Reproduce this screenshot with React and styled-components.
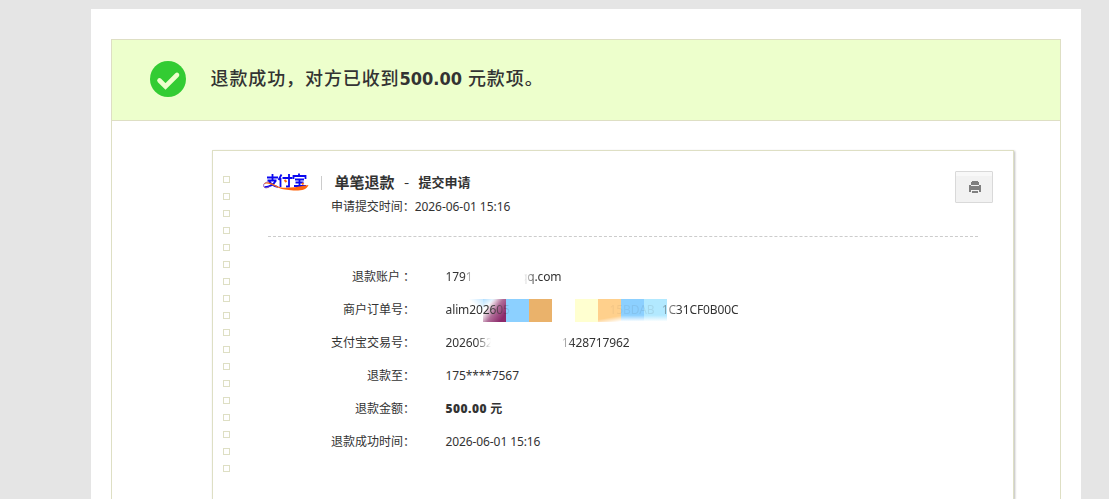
import React from 'react'
import styled, { createGlobalStyle } from 'styled-components'

const GlobalStyle = createGlobalStyle`
  * {
    box-sizing: border-box;
  }
  body {
    margin: 0;
    background: #e5e5e5;
    color: #333;
    font: 12px/20px "Noto Sans", "Noto Sans CJK SC", sans-serif;
    overflow: hidden;
  }
`

const Page = styled.div`
  width: 990px;
  height: 490px;
  margin: 9px 0 0 91px;
  padding: 30px 20px 0;
  background: #fff;
`

const Panel = styled.section`
  height: 460px;
  border: 1px solid #dedfc4;
  border-bottom: 0;
`

const Banner = styled.header`
  display: flex;
  align-items: center;
  height: 81px;
  padding: 0 0 2px 37.5px;
  gap: 25px;
  background: #edffcc;
  border-bottom: 1px solid #dedfc4;
`

const BannerText = styled.h1`
  margin: -2px 0 0;
  font: 500 18px/26px "Noto Sans CJK SC", sans-serif;
  letter-spacing: 0.9px;
  white-space: nowrap;

  b {
    margin-right: 1px;
    font: bold 18px/26px "DejaVu Sans Condensed", "DejaVu Sans", sans-serif;
    font-stretch: condensed;
    letter-spacing: 0;
  }
`

const Receipt = styled.article`
  display: flex;
  width: 802px;
  height: 349px;
  margin: 29px 0 0 100px;
  border: 1px solid #dedfc4;
  border-bottom: 0;
  box-shadow: 1px 1px 2px #bbb;
`

const Holes = styled.div`
  display: flex;
  flex-direction: column;
  gap: 10px;
  width: 54px;
  padding: 25px 0 0 10px;
`

const Hole = styled.i`
  flex: none;
  width: 7px;
  height: 7px;
  border: 1px solid #dedfc4;
`

const Body = styled.div`
  flex: 1;
  padding: 20px 20px 0 0;
`

const Heading = styled.div`
  display: flex;
  width: 711px;
  height: 65px;
  margin-left: 1px;
`

const Logo = styled.svg`
  width: 47px;
  height: 19px;
  margin: 2px 0 0 -5px;
`

const Divider = styled.i`
  width: 1px;
  height: 14px;
  margin: 5px 0 0 11px;
  background: #ccc;
`

const Titles = styled.div`
  flex: 1;
  margin-left: 12.5px;
`

const Title = styled.h2`
  display: flex;
  height: 24px;
  margin: -1px 0 0;
  font: 700 15px/24px "Noto Sans CJK SC", sans-serif;
`

const Dash = styled.span`
  width: 24px;
  font-weight: 400;
  text-align: center;
`

const Stage = styled.span`
  font-size: 13px;
`

const Submitted = styled.div`
  margin-left: -3.5px;
  padding-top: 3px;
  letter-spacing: -0.05px;
`

const PrintButton = styled.button`
  display: flex;
  align-items: center;
  justify-content: center;
  width: 38px;
  height: 32px;
  margin-right: -14px;
  padding: 0 0 0 2px;
  border: 1px solid #d9d9d9;
  border-radius: 1px;
  background: linear-gradient(#f8f8f8 4px, #f2f2f2 4px);
`

const Rule = styled.div`
  width: 710px;
  margin-left: 1px;
  border-top: 1px dashed #ccc;
`

const Details = styled.dl`
  margin: 23px 0 0;
`

const Row = styled.div`
  display: flex;
  align-items: center;
  height: 33px;
`

const Label = styled.dt`
  width: 148px;
  text-align: right;
  white-space: pre;
`

const Value = styled.dd`
  position: relative;
  z-index: 0;
  display: flex;
  margin: 0 0 0 30.5px;
  font-weight: ${p => (p.$strong ? 700 : 400)};
  letter-spacing: ${p => (p.$strong ? 0 : -0.1)}px;
  white-space: nowrap;

  b {
    margin-right: 3px;
    letter-spacing: 0.5px;
  }
`

// a piece of a hidden value, faded out where the hidden part starts
const Piece = styled.span`
  display: flex;
  justify-content: ${p => (p.$to === 'to left' ? 'flex-end' : 'flex-start')};
  width: ${p => p.$width}px;
  margin-left: ${p => p.$gap || 0}px;
  mask-image: linear-gradient(
    ${p => p.$to},
    #000 calc(100% - ${p => p.$fade}px),
    transparent calc(100% - ${p => p.$blank || 0}px)
  );
`

const Ghost = styled.span`
  display: flex;
  justify-content: flex-end;
  width: 46px;
  margin-left: 93px;
  opacity: 0.2;
  mask-image: linear-gradient(to left, #0008, #0004);
`

const Mosaic = styled.div`
  position: absolute;
  z-index: -1;
  top: -1px;
  left: 14.5px;
  display: flex;
`

const Tile = styled.i`
  width: 23px;
  height: 23px;
  background: ${p => p.$fill};
`

const tiles = [
  'linear-gradient(45deg, #c8e8ff00 68%, #c8e8ff)',
  'linear-gradient(145deg, #b5e0ff 2%, #fff0 28%), linear-gradient(125deg, #fff 24%, #b06d98 52%, #8c296b 84%)',
  '#8cd0ff',
  '#eab26b',
  'transparent',
  '#ffffd0',
  'linear-gradient(170deg, #ffd08c 76%, #fff 98%)',
  'linear-gradient(#8cd0ff 70%, #fff 98%)',
  'linear-gradient(#b2e9ff 70%, #fff 98%)',
]

function AlipayLogo() {
  return (
    <Logo viewBox="0 0 47 19">
      <g fill="none" stroke="#0b08f0" strokeWidth="1.8">
        <path d="M4 4.5h11M9.5 1v6M4.5 7.5h9M13 7.5C11 11 7 14 1.5 14.2M6 8c2 3.5 5 5 9 6" />
        <path d="M18.5 1.5 15.5 7M17.5 5v9M19.5 5h10M26 1v12.5h-3" />
        <path d="M36 .5v2M30.500 6V3h12v3M32 6.500h9M32.500 9.500h8M36.500 6.500v6M31 13h12" />
      </g>
      <path d="M21.500 7l2 2M39 10l1.500 1.500" stroke="#ff6a10" strokeWidth="2" />
      <path
        d="M6 9C2 9 0 11 .8 13.500c.8 2 4.500 1.600 6-.5"
        fill="none" stroke="#8a50b0"
      />
      <path d="M1 11c3-3 8-1 11 1 5 3 9 3 15 2.600 7-.2 12-1.600 18.500-2.600-2 5-7 5.600-15 5.400C17 17 13 13.500 8 11.500 5 10.300 3 10 1 11Z" fill="#ff650d" />
    </Logo>
  )
}

export default function App() {
  return (
    <>
      <GlobalStyle />
      <Page>
        <Panel>
          <Banner>
            <svg width="36" height="36" viewBox="0 0 36 36">
              <circle cx="18" cy="18" r="18" fill="#3c3" />
              <path d="m9.500 19.500 6 6L27 14" fill="none" stroke="#edffcc" strokeWidth="4.600" strokeLinecap="round" />
            </svg>
            <BannerText>退款成功，对方已收到<b>500.00</b> 元款项。</BannerText>
          </Banner>
          <Receipt>
            <Holes>
              {Array.from({ length: 18 }, (_, i) => <Hole key={i} />)}
            </Holes>
            <Body>
              <Heading>
                <AlipayLogo />
                <Divider />
                <Titles>
                  <Title>单笔退款<Dash>-</Dash><Stage>提交申请</Stage></Title>
                  <Submitted>申请提交时间：2026-06-01 15:16</Submitted>
                </Titles>
                <PrintButton aria-label="打印">
                  <svg width="12" height="12" viewBox="0 0 12 12" fill="#808080">
                    <path d="M3 0h6v1h1v3H2V1h1zM0 4h2v1h8V4h2v7h-2V9H2v2H0zM3 10h6v2H3z" />
                  </svg>
                </PrintButton>
              </Heading>
              <Rule />
              <Details>
                <Row>
                  <Label>退款账户 ：</Label>
                  <Value>
                    <Piece $width={35} $fade={17} $blank={8} $to="to right">17913</Piece>
                    <Piece $width={41} $gap={40} $fade={15} $blank={3} $to="to left">qq.com</Piece>
                  </Value>
                </Row>
                <Row>
                  <Label>商户订单号：</Label>
                  <Value>
                    <Piece $width={70} $fade={26} $blank={5} $to="to right">alim202605</Piece>
                    <Ghost>15BDAB</Ghost>
                    <Piece $width={84} $fade={26} $to="to left">1C31CF0B00C</Piece>
                    <Mosaic>
                      {tiles.map((fill, i) => <Tile key={i} $fill={fill} />)}
                    </Mosaic>
                  </Value>
                </Row>
                <Row>
                  <Label>支付宝交易号：</Label>
                  <Value>
                    <Piece $width={49} $fade={19} $blank={4} $to="to right">2026052</Piece>
                    <Piece $width={70} $gap={65} $fade={13} $to="to left">1428717962</Piece>
                  </Value>
                </Row>
                <Row>
                  <Label>退款至：</Label>
                  <Value>175****7567</Value>
                </Row>
                <Row>
                  <Label>退款金额：</Label>
                  <Value $strong><b>500.00</b>元</Value>
                </Row>
                <Row>
                  <Label>退款成功时间：</Label>
                  <Value>2026-06-01 15:16</Value>
                </Row>
              </Details>
            </Body>
          </Receipt>
        </Panel>
      </Page>
    </>
  )
}
